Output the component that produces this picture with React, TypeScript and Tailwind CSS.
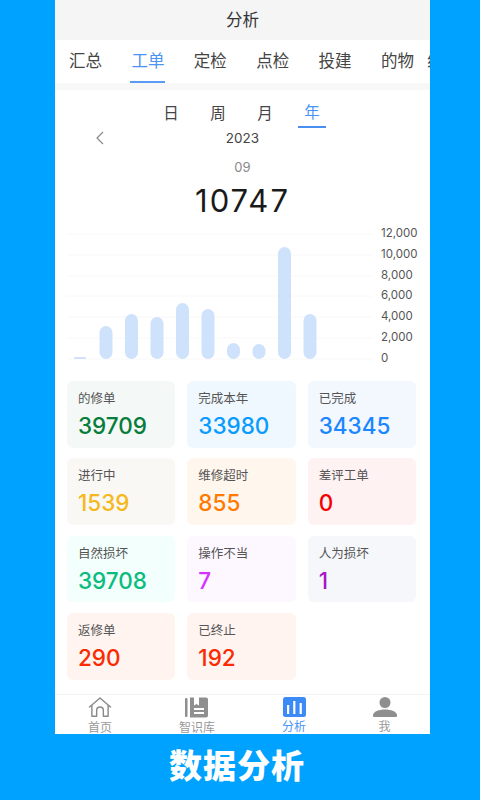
import React from 'react';

const font = "font-['Inter','Noto_Sans_CJK_SC',sans-serif]";

const tabs = ['汇总', '工单', '定检', '点检', '投建', '的物'];
const periods = ['日', '周', '月', '年'];
const bars = [2, 33, 45, 42, 56, 50, 16, 15, 112, 45];
const ticks = ['12,000', '10,000', '8,000', '6,000', '4,000', '2,000', '0'];

const cards = [
  { label: '的修单', value: '39709', bg: 'bg-[#f4f9f7]', color: 'text-[#067d3a]' },
  { label: '完成本年', value: '33980', bg: 'bg-[#f0f8ff]', color: 'text-[#0a9bff]' },
  { label: '已完成', value: '34345', bg: 'bg-[#f3f8ff]', color: 'text-[#1a86ff]' },
  { label: '进行中', value: '1539', bg: 'bg-[#f9f8f4]', color: 'text-[#f5b820]' },
  { label: '维修超时', value: '855', bg: 'bg-[#fff6ee]', color: 'text-[#ff7a00]' },
  { label: '差评工单', value: '0', bg: 'bg-[#fff2f3]', color: 'text-[#f50000]' },
  { label: '自然损坏', value: '39708', bg: 'bg-[#f2fffc]', color: 'text-[#0cbc7e]' },
  { label: '操作不当', value: '7', bg: 'bg-[#fdf7ff]', color: 'text-[#d633ff]' },
  { label: '人为损坏', value: '1', bg: 'bg-[#f6f7fb]', color: 'text-[#a815c9]' },
  { label: '返修单', value: '290', bg: 'bg-[#fff4f0]', color: 'text-[#fb2a00]' },
  { label: '已终止', value: '192', bg: 'bg-[#fff4f0]', color: 'text-[#fb2a00]' },
];

function Chart() {
  return (
    <div className="flex h-[146px] pl-3">
      <svg width="305" height="140" viewBox="0 0 305 140" className="mt-[5px]">
        {[3, 24, 45, 65, 86, 107, 128].map((y) => (
          <line key={y} x1="0" x2="305" y1={y} y2={y} stroke="#f8f8f8" strokeWidth="1" />
        ))}
        {bars.map((h, i) => (
          <rect
            key={i}
            x={7 + i * 25.5}
            y={128 - h}
            width={i === 0 ? 12 : 13}
            height={h}
            rx={i === 0 ? 1 : 6.5}
            fill="#cfe2fb"
          />
        ))}
      </svg>
      <div className="ml-[9px] flex h-[139px] flex-col justify-between text-[11.5px] leading-[14px] text-[#555]">
        {ticks.map((t) => (
          <span key={t}>{t}</span>
        ))}
      </div>
    </div>
  );
}

function Card({ label, value, bg, color }: (typeof cards)[number]) {
  return (
    <div className={`h-[66.7px] rounded-md pl-[11px] pt-[9px] ${bg}`}>
      <div className="text-[12.5px] leading-[18px] text-[#555]">{label}</div>
      <div className={`mt-[3px] text-[22.5px] font-medium leading-[30px] ${color}`}>{value}</div>
    </div>
  );
}

function TabIcon({ name }: { name: string }) {
  if (name === 'home') {
    return (
      <svg width="24" height="21" viewBox="0 0 24 22" fill="none" stroke="#8a8a8a" strokeWidth="1.5" strokeLinejoin="round" strokeLinecap="round">
        <path d="M1 10.5 12 1l11 9.5" />
        <path d="M3.5 9v11.2h5V14a3.5 3.5 0 0 1 7 0v6.2h5V9" />
      </svg>
    );
  }
  if (name === 'book') {
    return (
      <svg width="24" height="21" viewBox="0 0 24 21" fill="#8f8f8f">
        <rect x="0" y="1" width="2.5" height="19" rx="1" />
        <path d="M5 .5h4v8l2.5-1.5L14 8.5v-8h7a2 2 0 0 1 2 2v16a2 2 0 0 1-2 2H5zm4 10.5v2h10v-2zm0 4v2h10v-2z" fillRule="evenodd" />
      </svg>
    );
  }
  if (name === 'chart') {
    return (
      <svg width="23" height="20" viewBox="0 0 23 20">
        <rect width="23" height="20" rx="2.5" fill="#3b8af5" />
        <rect x="4" y="8" width="2.2" height="9" fill="#fff" />
        <rect x="10.2" y="4" width="2.2" height="13" fill="#fff" />
        <rect x="16.6" y="6" width="2.2" height="11" fill="#fff" />
      </svg>
    );
  }
  return (
    <svg width="24" height="20" viewBox="0 0 24 20" fill="#8f8f8f">
      <circle cx="12" cy="5.5" r="5.5" />
      <path d="M1 20c-1 0-1-1-1-1.5C0 14.5 6 12.5 12 12.5s12 2 12 6c0 .5 0 1.5-1 1.5z" />
    </svg>
  );
}

export default function App() {
  return (
    <div className={`flex h-[800px] w-[480px] flex-col bg-[#00a2ff] ${font}`}>
      <div className="ml-[55px] flex h-[734px] w-[375px] flex-col bg-white">
        <div className="flex h-10 items-center justify-center bg-[#f5f5f5] pt-[1px] text-[16.5px] text-[#333]">分析</div>

        <div className="flex h-[43px] gap-[29.4px] overflow-hidden pl-[14px] text-[16.5px] text-[#444]">
          {tabs.map((t, i) => (
            <div key={t} className="relative flex w-[33px] shrink-0 items-center justify-center">
              <span className={i === 1 ? 'text-[#4a94f5]' : ''}>{t}</span>
              {i === 1 && <div className="absolute bottom-0 left-[-1px] right-[-1px] h-[2px] bg-[#5a9cf5]" />}
            </div>
          ))}
          <span className="ml-[-16px] flex shrink-0 items-center">统计</span>
        </div>

        <div className="h-[7px] bg-[#f8f8f8]" />

        <div className="flex h-[38px] justify-center gap-[19px] pr-[2px] pt-[7px] text-[15.5px] text-[#444]">
          {periods.map((p, i) => (
            <div key={p} className={`flex h-[31px] w-[28px] items-center justify-center pt-[2px] ${i === 3 ? 'border-b-2 border-[#4a8ff0] text-[#4a94f5]' : ''}`}>
              {p}
            </div>
          ))}
        </div>

        <div className="relative text-center text-[13.5px] leading-[20px] text-[#444]">
          <svg className="absolute left-[39px] top-[3px]" width="12" height="14" viewBox="0 0 12 14" fill="none" stroke="#888" strokeWidth="1.2">
            <path d="M9 1 3 7l6 6" />
          </svg>
          2023
        </div>
        <div className="mt-[9px] text-center text-[13px] leading-[20px] text-[#888]">09</div>
        <div className="mt-[3px] text-center text-[31px] leading-[42px] tracking-[2px] text-[#1a1a1a]">10747</div>

        <div className="mt-[4px]">
          <Chart />
        </div>

        <div className="mt-[9px] grid grid-cols-3 gap-x-3 gap-y-[10.7px] pl-3 pr-[14px]">
          {cards.map((c) => (
            <Card key={c.label} {...c} />
          ))}
        </div>

        <div className="mt-auto grid h-[40px] grid-cols-[90px_104px_90px_91px] border-t border-[#f3f3f3] text-[12px] text-[#999]">
          {[
            ['home', '首页'],
            ['book', '智识库'],
            ['chart', '分析'],
            ['me', '我'],
          ].map(([icon, label]) => (
            <div key={label} className="flex flex-col items-center pt-[2px]">
              <TabIcon name={icon} />
              <span className={`mt-[3px] leading-[14px] ${icon === 'chart' ? 'text-[#4a94f5]' : ''}`}>{label}</span>
            </div>
          ))}
        </div>
      </div>

      <div className="flex flex-1 items-center justify-center pr-[6px] text-[33px] font-black tracking-[1px] text-white">数据分析</div>
    </div>
  );
}
